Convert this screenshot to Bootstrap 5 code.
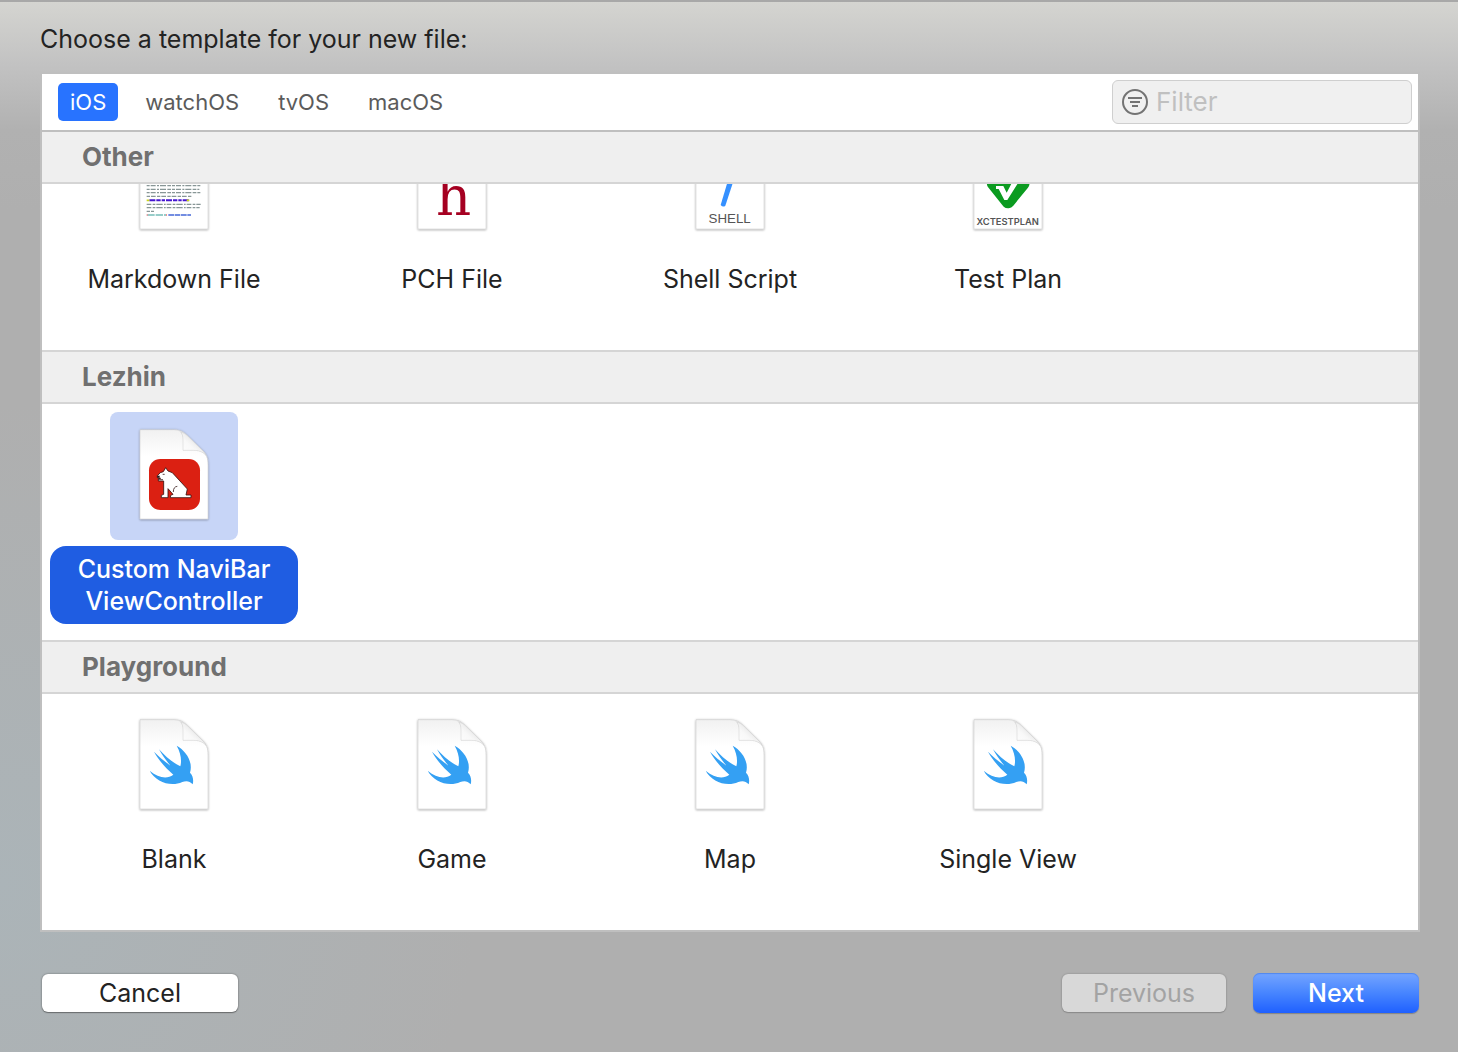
<!DOCTYPE html>
<html lang="en">
<head>
<meta charset="utf-8">
<meta name="viewport" content="width=device-width, initial-scale=1">
<title>New File</title>
<link href="https://cdn.jsdelivr.net/npm/bootstrap@5.3.0/dist/css/bootstrap.min.css" rel="stylesheet">
<style>
  body {
    font-family: Inter, "Liberation Sans", sans-serif;
    font-size: 25px;
    line-height: 32px;
    color: #232323;
    background:
      radial-gradient(circle at 0 84%, #abb4b8 0, rgba(171,180,184,0) 480px),
      linear-gradient(to bottom, rgba(215,215,211,.95) 0, rgba(196,196,196,.9) 65px, rgba(180,180,180,.4) 130px, rgba(175,175,175,0) 210px),
      #afafaf;
  }
  .sheet { padding: 21px 38px 39px 40px; border-top: 2px solid #a8a8a8; }
  .sheet-title { font-size: 25px; line-height: 32px; font-weight: 400; margin-bottom: 17px; }
  .chooser { border: 2px solid #bfbfbf; background: #fff; }
  .platforms { height: 58px; padding: 0 6px 0 16px; border-bottom: 2px solid #bfbfbf; }
  .platform-tabs { gap: 15px; }
  .platform {
    height: 38px; padding: 0 12px; border: 0; border-radius: 5px;
    background: transparent; color: #5b5b5b; font-size: 22px; line-height: 38px;
  }
  .platform.active { background: #2873ff; color: #fff; }
  .filter-box {
    width: 300px; height: 44px; padding: 0 9px; gap: 8px;
    background: #f0f0f0; border: 1px solid #cfcfcf; border-radius: 6px;
  }
  .filter-box input { min-width: 0; padding: 0; border: 0; outline: 0; background: transparent; font-size: 26px; }
  .filter-box input::placeholder { color: #c0c0c0; opacity: 1; }
  .group-head {
    height: 54px; margin: 0; padding: 0 40px; line-height: 50px;
    font-size: 26px; font-weight: 700; color: #707070;
    background: #efefef; border-top: 2px solid #d5d5d5; border-bottom: 2px solid #d5d5d5;
  }
  .group-head.pinned { height: 52px; border-top: 0; }
  .group-items { padding: 8px 8px 16px; column-gap: 30px; }
  .scrolled { height: 166px; }
  .template { width: 248px; gap: 6px; padding: 0; border: 0; background: transparent; color: inherit; }
  .thumb { width: 128px; height: 128px; border-radius: 8px; }
  .template-name { min-height: 78px; width: 100%; padding: 7px 20px; border-radius: 16px; }
  .template.selected .thumb { background: #c7d5f7; }
  .template.selected .template-name { background: #1f5de2; color: #fff; font-weight: 500; }
  .thumb svg { display: block; width: 128px; height: 128px; }
  .actions { margin-top: 41px; padding-left: 2px; padding-right: 1px; }
  .push { height: 38px; padding: 0; border: 0; border-radius: 6px; font-size: 25px; line-height: 38px; color: #232323; }
  .push-plain { width: 196px; background: #fff; box-shadow: 0 0 2px rgba(0,0,0,.45), 0 1px 1px rgba(0,0,0,.3); }
  .push-off { width: 164px; margin-right: 27px; background: #d8d8d8; color: #a3a3a3; box-shadow: 0 0 2px rgba(0,0,0,.28), 0 1px 1px rgba(0,0,0,.15); }
  .push-main { width: 166px; height: 40px; border-radius: 7px; background: linear-gradient(#75a5ff, #4785ff 50%, #1f60ff); color: #fff; font-weight: 500; box-shadow: inset 0 1px 1px #5188ee, 0 1px 1px rgba(0,0,0,.25); }
</style>
</head>
<body>
<svg width="0" height="0" class="position-absolute" aria-hidden="true">
  <defs>
    <linearGradient id="shade" x1="0" y1="0" x2="0" y2="1">
      <stop offset="0" stop-color="#f1f1f1"/><stop offset=".3" stop-color="#fff"/>
    </linearGradient>
    <linearGradient id="curl" x1="0" y1="1" x2=".8" y2=".2">
      <stop offset="0" stop-color="#fff"/><stop offset=".5" stop-color="#f8f8f8"/><stop offset="1" stop-color="#dcdcdc"/>
    </linearGradient>
    <filter id="lift" x="-10%" y="-10%" width="120%" height="120%">
      <feDropShadow dx="0" dy="2" stdDeviation="3" flood-opacity=".4"/>
    </filter>
    <symbol id="page" viewBox="0 0 384 384">
      <path d="M90 53H192C213 53 221 60 232 71L279 117C291 129 294 139 294 159V321H90Z" fill="url(#shade)" stroke="#c4c4c4" stroke-width="1.5" filter="url(#lift)"/>
      <path d="M192 54C211 54 219 66 219 86V115H250C274 115 290 125 293 148C293 136 288 126 279 117L232 71C221 60 211 54 192 54Z" fill="#d9d9d9" opacity=".65"/>
      <path d="M219 115V82C219 74 217 67 213 61C221 62 226 66 232 71L279 117C283 121 286 126 288 130C278 119 265 115 250 115Z" fill="url(#curl)" stroke="#cfcfcf" stroke-width="1.5"/>
    </symbol>
    <symbol id="swift" viewBox="0 0 384 384">
      <path fill="#34a0f3" d="M119 206C145 227 170 233 190 218C165 197 146 174 132 149C149 166 165 179 181 191C169 176 157 160 147 142C165 162 186 181 211 193C216 175 212 152 200 131C228 146 250 180 240 212C250 222 251 236 248 247C238 234 225 237 217 240C181 256 137 239 119 206Z"/>
    </symbol>
  </defs>
</svg>

<main class="sheet min-vh-100">
  <h1 class="sheet-title">Choose a template for your new file:</h1>

  <section class="chooser">
    <div class="platforms d-flex align-items-center justify-content-between">
      <nav class="platform-tabs d-flex align-items-center" aria-label="Platform">
        <button type="button" class="platform active">iOS</button>
        <button type="button" class="platform">watchOS</button>
        <button type="button" class="platform">tvOS</button>
        <button type="button" class="platform">macOS</button>
      </nav>
      <label class="filter-box d-flex align-items-center">
        <svg width="26" height="26" viewBox="0 0 26 26" fill="none" stroke="#737373" stroke-width="2" class="flex-shrink-0" aria-hidden="true">
          <circle cx="13" cy="13" r="12"/><path d="M6 9H20M8 13H18M10 17H16"/>
        </svg>
        <input type="text" class="flex-grow-1" placeholder="Filter" aria-label="Filter">
      </label>
    </div>

    <h2 class="group-head pinned">Other</h2>
    <div class="scrolled d-flex flex-column justify-content-end overflow-hidden">
      <div class="group-items d-flex">
        <button type="button" class="template d-flex flex-column align-items-center">
          <span class="thumb"><svg viewBox="0 0 384 384" aria-hidden="true"><use href="#page"/>
            <g fill="none" stroke="#566b6b" stroke-width="4" opacity=".7">
              <path d="M110 191H272M110 202H268M110 212H272" stroke-dasharray="9 3 15 4 6 3 18 4 11 3"/>
              <path d="M110 180H268M110 247H272M110 257H269" stroke-dasharray="14 4 8 3 19 4 5 3"/>
              <path d="M110 223H244M110 268H132" stroke-dasharray="10 3 14 4"/>
            </g>
            <path d="M118 235H238" stroke="#4516cf" stroke-width="6" stroke-dasharray="18 3 13 3 10 3"/>
            <path d="M110 235H118M230 235H238" stroke="#c9d51c" stroke-width="5"/>
            <path d="M112 279H168" stroke="#75bdb8" stroke-width="4" stroke-dasharray="22 3"/>
            <path d="M110 279H113M168 279H171" stroke="#ee6b72" stroke-width="5"/>
            <path d="M175 279H243" stroke="#4668d8" stroke-width="4" stroke-dasharray="17 2"/>
          </svg></span>
          <span class="template-name">Markdown File</span>
        </button>
        <button type="button" class="template d-flex flex-column align-items-center">
          <span class="thumb"><svg viewBox="0 0 384 384" aria-hidden="true"><use href="#page"/>
            <text x="197" y="278" text-anchor="middle" font-family="DejaVu Serif, serif" font-size="164" fill="#a50021">h</text>
          </svg></span>
          <span class="template-name">PCH File</span>
        </button>
        <button type="button" class="template d-flex flex-column align-items-center">
          <span class="thumb"><svg viewBox="0 0 384 384" aria-hidden="true"><use href="#page"/>
            <path d="M164 249L187 172H204L178 251Q171 257 164 249Z" fill="#3590ff"/>
            <text x="191" y="304" text-anchor="middle" font-family="Liberation Sans, sans-serif" font-size="40" fill="#555">SHELL</text>
          </svg></span>
          <span class="template-name">Shell Script</span>
        </button>
        <button type="button" class="template d-flex flex-column align-items-center">
          <span class="thumb"><svg viewBox="0 0 384 384" aria-hidden="true"><use href="#page"/>
            <path d="M192 138L236 184L192 238L149 184Z" fill="#0b9b20" stroke="#0b9b20" stroke-width="41" stroke-linejoin="round"/>
            <path d="M156 192V201H164L181 234H190L224 180H205L188 212L178 192Z" fill="#fff"/>
            <text x="191" y="309" text-anchor="middle" font-family="Inter, sans-serif" font-size="28" font-weight="600" fill="#555">XCTESTPLAN</text>
          </svg></span>
          <span class="template-name">Test Plan</span>
        </button>
      </div>
    </div>

    <h2 class="group-head">Lezhin</h2>
    <div class="group-items d-flex">
      <button type="button" class="template selected d-flex flex-column align-items-center" aria-pressed="true">
        <span class="thumb"><svg viewBox="0 0 384 384" aria-hidden="true"><use href="#page"/>
          <rect x="117" y="141" width="153" height="153" rx="34" fill="#db2012"/>
          <path d="M142 191L151 182L160 179L167 167L174 177L187 182L232 231L228 249H243V257H181L182 250L189 247L174 230V257H154V250L161 247V207H145V200L152 199L142 197Z" fill="#fff" stroke="#381512" stroke-width="2.5" stroke-linejoin="round"/>
          <path d="M142 191H149V197H142Z" fill="#241414"/><path d="M158 187H164M190 240Q190 224 202 223M145 203H159" stroke="#3b2020" stroke-width="2.5" fill="none"/>
        </svg></span>
        <span class="template-name">Custom NaviBar ViewController</span>
      </button>
    </div>

    <h2 class="group-head">Playground</h2>
    <div class="group-items d-flex">
      <button type="button" class="template d-flex flex-column align-items-center">
        <span class="thumb"><svg viewBox="0 0 384 384" aria-hidden="true"><use href="#page"/><use href="#swift"/></svg></span>
        <span class="template-name">Blank</span>
      </button>
      <button type="button" class="template d-flex flex-column align-items-center">
        <span class="thumb"><svg viewBox="0 0 384 384" aria-hidden="true"><use href="#page"/><use href="#swift"/></svg></span>
        <span class="template-name">Game</span>
      </button>
      <button type="button" class="template d-flex flex-column align-items-center">
        <span class="thumb"><svg viewBox="0 0 384 384" aria-hidden="true"><use href="#page"/><use href="#swift"/></svg></span>
        <span class="template-name">Map</span>
      </button>
      <button type="button" class="template d-flex flex-column align-items-center">
        <span class="thumb"><svg viewBox="0 0 384 384" aria-hidden="true"><use href="#page"/><use href="#swift"/></svg></span>
        <span class="template-name">Single View</span>
      </button>
    </div>
  </section>

  <footer class="actions d-flex align-items-center">
    <button type="button" class="push push-plain me-auto">Cancel</button>
    <button type="button" class="push push-off" disabled>Previous</button>
    <button type="button" class="push push-main">Next</button>
  </footer>
</main>
<script src="https://cdn.jsdelivr.net/npm/bootstrap@5.3.0/dist/js/bootstrap.bundle.min.js"></script>
</body>
</html>
